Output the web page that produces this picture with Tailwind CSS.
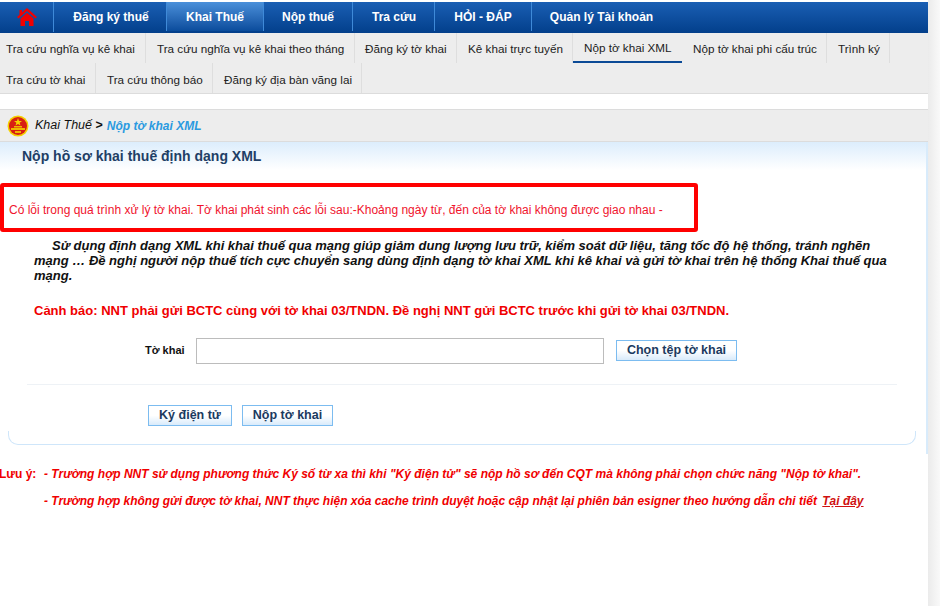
<!DOCTYPE html>
<html lang="vi">
<head>
    <meta charset="UTF-8">
    <title>Nộp tờ khai XML</title>
    <script src="https://cdn.jsdelivr.net/npm/@tailwindcss/browser@4"></script>
</head>
<body class="bg-white font-['Liberation_Sans',Arial,sans-serif] overflow-hidden">
<div class="w-[940px] h-[606px] flex overflow-hidden">
    <div class="w-[928px] shrink-0 flex flex-col">
        <!-- menu chinh -->
        <nav class="mt-[2px] h-[31px] flex bg-gradient-to-b from-[#1a5fb4] to-[#033f8b] text-white text-[12px] font-bold">
            <a class="w-[54px] h-[30px] flex items-center justify-center border-r border-[#3f8ad8]">
                <svg width="22" height="20" viewBox="0 0 22 20" fill="#f00000">
                    <path d="M11 1 L21 10 L19.500 11.500 L11 4 L2.500 11.500 L1 10 L3.500 7.700 L3.500 3 L6 3 L6 5.500 Z"/>
                    <path d="M4.500 11.500 L11 5.700 L17.500 11.500 L17.500 19 L13 19 L13 14 L9 14 L9 19 L4.500 19 Z"/>
                </svg>
            </a>
            <a class="w-[113px] h-[29px] flex items-center justify-center border-r border-[#3f8ad8] pl-[2px]">Đăng ký thuế</a>
            <a class="w-[97px] h-[29px] flex items-center justify-center border-r border-[#3f8ad8] bg-gradient-to-b from-[#4a90da] to-[#0a4c9c]">Khai Thuế</a>
            <a class="w-[89px] h-[29px] flex items-center justify-center border-r border-[#3f8ad8]">Nộp thuế</a>
            <a class="w-[82px] h-[29px] flex items-center justify-center border-r border-[#3f8ad8] pl-[1px]">Tra cứu</a>
            <a class="w-[97px] h-[29px] flex items-center justify-center border-r border-[#3f8ad8]">HỎI - ĐÁP</a>
            <a class="w-[143px] h-[29px] flex items-center justify-center pr-[4px]">Quản lý Tài khoản</a>
        </nav>
        <!-- menu con -->
        <div class="h-[61px] bg-[#ededed] border-b border-[#dcdcdc] text-[11.700px] text-[#222]">
            <div class="h-[30px] flex">
                <a class="w-[146px] pl-[6px] pt-[1px] flex items-center border-r border-[#dedede]">Tra cứu nghĩa vụ kê khai</a>
                <a class="w-[209px] pl-[11px] pt-[1px] flex items-center border-r border-[#dedede]">Tra cứu nghĩa vụ kê khai theo tháng</a>
                <a class="w-[102px] pl-[10px] pt-[1px] flex items-center border-r border-[#dedede]">Đăng ký tờ khai</a>
                <a class="w-[116px] pl-[11px] pt-[1px] flex items-center border-r border-[#dedede]">Kê khai trực tuyến</a>
                <a class="w-[109px] pl-[11px] pt-[1px] flex items-center border-b-2 border-[#0b4a96]">Nộp tờ khai XML</a>
                <a class="w-[145px] pl-[11px] pt-[1px] flex items-center border-r border-[#dedede]">Nộp tờ khai phi cấu trúc</a>
                <a class="w-[63px] pl-[11px] pt-[1px] flex items-center border-r border-[#dedede]">Trình ký</a>
            </div>
            <div class="h-[30px] flex">
                <a class="w-[96px] pl-[6px] pt-[3px] flex items-center border-r border-[#dedede]">Tra cứu tờ khai</a>
                <a class="w-[117px] pl-[11px] pt-[3px] flex items-center border-r border-[#dedede]">Tra cứu thông báo</a>
                <a class="w-[149px] pl-[11px] pt-[3px] flex items-center border-r border-[#dedede]">Đăng ký địa bàn vãng lai</a>
            </div>
        </div>
        <!-- duong dan -->
        <div class="mt-[15px] h-[33px] bg-[#ededed] border-y border-[#dcdcdc] flex items-center pl-[7px] gap-[6px] text-[12px] italic font-bold">
            <svg width="22" height="22" viewBox="0 0 22 22">
                <circle cx="11" cy="11" r="10.500" fill="#f5d000"/>
                <circle cx="11" cy="11" r="9" fill="#d81e12"/>
                <path d="M11 3 L12 6 L15 6 L12.600 7.800 L13.500 10.500 L11 8.900 L8.500 10.500 L9.400 7.800 L7 6 L10 6 Z" fill="#f5d000"/>
                <path d="M4 13 H18 V15 H4 Z M7 11 H15 V12.500 H7 Z M8 16 H14 V18 H8 Z" fill="#eeb500"/>
            </svg>
            <span class="text-[12.500px] font-normal text-[#111]">Khai Thuế <b class="not-italic font-bold">&gt;</b></span>
            <span class="text-[#2a9ae0] -ml-[2px]">Nộp tờ khai XML</span>
        </div>
        <!-- noi dung -->
        <section class="w-[928px] h-[312px] shrink-0 border-r-2 border-[#d8ebfb] bg-gradient-to-b from-[#dcedfc] via-white via-[9%] to-white flex flex-col">
            <h1 class="pl-[22px] pt-[4px] h-[41px] text-[14px] font-bold text-[#1f3f66]">Nộp hồ sơ khai thuế định dạng XML</h1>
            <div class="w-[698px] h-[49px] border-4 border-[#ff0000] rounded-[3px] flex items-center pl-[5px] pt-[4px] text-[12px] text-[#f0142d] bg-white">Có lỗi trong quá trình xử lý tờ khai. Tờ khai phát sinh các lỗi sau:-Khoảng ngày từ, đến của tờ khai không được giao nhau -</div>
            <p class="mt-[6px] ml-[34px] w-[862px] text-[13px] leading-[15px] italic font-bold text-[#111] indent-[18px]">Sử dụng định dạng XML khi khai thuế qua mạng giúp giảm dung lượng lưu trữ, kiểm soát dữ liệu, tăng tốc độ hệ thống, tránh nghẽn mạng … Đề nghị người nộp thuế tích cực chuyển sang dùng định dạng tờ khai XML khi kê khai và gửi tờ khai trên hệ thống Khai thuế qua mạng.</p>
            <p class="mt-[18px] ml-[34px] text-[13px] font-bold text-[#f00000]">Cảnh báo: NNT phải gửi BCTC cùng với tờ khai 03/TNDN. Đề nghị NNT gửi BCTC trước khi gửi tờ khai 03/TNDN.</p>
            <div class="mt-[17px] flex items-center h-[26px]">
                <label class="ml-[145px] w-[51px] text-[11px] font-bold text-[#111]">Tờ khai</label>
                <div class="w-[408px] h-[26px] border border-[#bcbcbc] bg-white"></div>
                <button class="ml-[12px] w-[121px] h-[21px] border border-[#7cbcf0] bg-gradient-to-b from-white via-white to-[#d9ebfb] text-[12.500px] font-bold text-[#1b3a5f] -mt-[1px]">Chọn tệp tờ khai</button>
            </div>
            <div class="mt-[20px] ml-[27px] w-[870px] border-t border-[#eef2f6]"></div>
            <div class="mt-[20px] ml-[148px] flex gap-[10px]">
                <button class="w-[84px] h-[21px] border border-[#7cbcf0] bg-gradient-to-b from-white via-white to-[#d9ebfb] text-[12.500px] font-bold text-[#1b3a5f]">Ký điện tử</button>
                <button class="w-[91px] h-[21px] border border-[#7cbcf0] bg-gradient-to-b from-white via-white to-[#d9ebfb] text-[12.500px] font-bold text-[#1b3a5f]">Nộp tờ khai</button>
            </div>
            <div class="mt-[5px] ml-[8px] w-[908px] h-[14px] border-x border-b border-[#cfe6fa] rounded-b-[10px]"></div>
        </section>
        <!-- luu y -->
        <div class="mt-[11px] text-[12px] font-bold text-[#f00000]">
            <div class="flex h-[28px]">
                <span class="w-[45px] -ml-[1px]">Lưu ý:</span>
                <span class="italic text-[12.030px]">- Trường hợp NNT sử dụng phương thức Ký số từ xa thì khi "Ký điện tử" sẽ nộp hồ sơ đến CQT mà không phải chọn chức năng "Nộp tờ khai".</span>
            </div>
            <p class="ml-[44px] italic text-[11.970px]">- Trường hợp không gửi được tờ khai, NNT thực hiện xóa cache trình duyệt hoặc cập nhật lại phiên bản esigner theo hướng dẫn chi tiết <a class="text-[#d01010] underline ml-[2px]">Tại đây</a></p>
        </div>
    </div>
    <div class="flex-1 bg-gradient-to-r from-[#ebebeb] to-[#f9f9f9]"></div>
</div>
</body>
</html>
